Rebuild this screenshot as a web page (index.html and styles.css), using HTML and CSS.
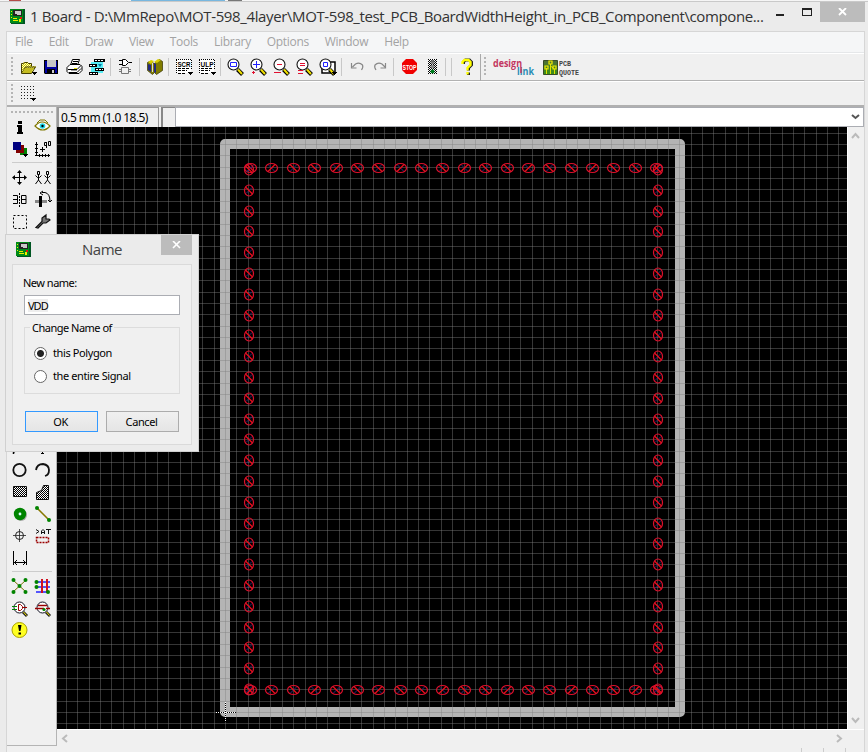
FILE: index.html
```html
<!DOCTYPE html>
<html lang="en">
<head>
<meta charset="utf-8">
<title>Board</title>
<link rel="stylesheet" href="styles.css">
</head>
<body>
<svg width="0" height="0" class="defs">
  <defs>
    <pattern id="dots" width="2" height="2" patternUnits="userSpaceOnUse"><path fill="#fff" d="M0 0h2v2H0z"/><path d="M0 0h1v1H0zM1 1h1v1H1z"/></pattern>
    <pattern id="ydots" width="2" height="2" patternUnits="userSpaceOnUse"><path fill="#ffffb0" d="M0 0h2v2H0z"/><path fill="#c6be00" d="M0 0h1v1H0zM1 1h1v1H1z"/></pattern>
    <linearGradient id="pq" x2="0" y2="1"><stop stop-color="#4f6e38"/><stop offset="1" stop-color="#3a9214"/></linearGradient>
    <symbol id="chip" viewBox="0 0 15 15"><path fill="#052" d="M1 0h14v15H1z"/><path fill="#008a18" d="M0 0h13v14H0z"/><path fill="#222" d="M3 1h9v6H3z"/><path fill="#c8c8c8" d="M5 2h6v4H7V5H5z"/><path fill="#ee0" d="M1 2h1v1H1zM1 5h1v1H1zM1 8h1v1H1zM3 9h4v1H3zM3 11h5v1H3zM9 10h2v3H9z"/><path fill="#e01010" d="M10 8h2v2h-2z"/></symbol>
    <symbol id="lens" viewBox="0 0 23 24"><path d="M13.500 14.500l5 5" stroke="#000" stroke-width="4"/><path d="M14 14.500l4 4.500" stroke="#f0e000" stroke-width="2"/><circle cx="9.500" cy="9.500" r="5.500" fill="#fff" stroke="#111" stroke-width="1.100"/></symbol>
    <symbol id="arrow" viewBox="0 0 5 3"><path d="M0 0h5v1H4v1H3v1H2V2H1V1H0z"/></symbol>
  </defs>
</svg>
<div class="window">
  <div class="behind"><i class="b1"></i><i class="b2"></i><i class="b3"></i></div>
  <header class="titlebar">
    <svg class="appicon" width="15" height="15"><use href="#chip" width="15" height="15"/></svg>
    <span class="caption">1 Board - D:\MmRepo\MOT-598_4layer\MOT-598_test_PCB_BoardWidthHeight_in_PCB_Component\compone...</span>
    <span class="min"></span><span class="max"></span>
    <span class="close"><svg width="10" height="8"><path d="M1 0l7 7M8 0L1 7" stroke="#fff" stroke-width="1.800"/></svg></span>
  </header>
  <div class="client">
    <nav class="menu"><span>File</span><span>Edit</span><span>Draw</span><span>View</span><span>Tools</span><span>Library</span><span>Options</span><span>Window</span><span>Help</span></nav>
    <div class="toolbar">
      <i class="grip"></i>
      <svg class="ic" viewBox="0 0 23 24"><path d="M5 18V8h2l1-1h4l1 1h3v3h4l-4 7z" fill="url(#ydots)"/><path d="M5.500 18V8.500h2l1-1h3l1 1h3V11M5.500 18.500l4-6.500h10l-4 6.500z" fill="none" stroke="#443e00"/><path d="M9 13h9l-3 5H6z" fill="#c4bc20"/><use href="#arrow" x="16" y="17" width="5" height="3"/></svg>
      <svg class="ic" viewBox="0 0 23 24"><path d="M5 5h14v14H6l-1-1z"/><path fill="#0000a0" d="M6 6h12v12H6z"/><path fill="#c5c5c5" d="M8 5h9v7H8z"/><path d="M8 14h8v5H8z"/><path fill="#ccc" d="M13 15h2v3h-2z"/></svg>
      <svg class="ic" viewBox="0 0 23 24"><path d="M8.500 10l2-5.500h7l-2 5.500M5 12.500l3-3h10l2 2v4l-3 3H7l-2-2z" fill="#fff" stroke="#000"/><path d="M11 6.500h5M10 8.500h5M6 14.500h9l4-4M7 17.500h8l4-4" stroke="#000" fill="none"/><path d="M12 13h3v1h-3z" fill="#dd0"/><path d="M9 15h6v1H9z" fill="#999"/></svg>
      <svg class="ic" viewBox="0 0 23 24"><path fill="#55edf5" d="M6 7h12v11H6z"/><path d="M9 4h11v3H9zM4 9h8v3H4zM10 13h9v3h-9zM4 17h9v3H4z"/><path stroke="#fff" stroke-dasharray="2 1" d="M10 5.500h9M5 10.500h6M11 14.500h7M5 18.500h7"/><path d="M13 9h4l-2 3z" fill="#0878a0"/></svg>
      <i class="sep"></i>
      <svg class="ic schem" viewBox="0 0 23 24"><path fill="#fff" stroke="#000" d="M9.500 4.500h3l3 3-3 3h-3z"/><path stroke="#000" d="M6 5.500h3M6 9.500h3M16 7.500h3"/><path fill="none" stroke="#777" d="M8.500 12.500h7v6h-7zM6 14.500h2M6 16.500h2M16 14.500h2M16 16.500h2"/></svg>
      <i class="sep"></i>
      <svg class="ic" viewBox="0 0 23 24"><path fill="#807c00" stroke="#343000" stroke-width=".7" d="M4.500 7.500l2-1 5 2 5-4 3 2v9l-6 4-2-2-2 2-5-4z"/><path fill="#d8d000" d="M5 7l3-2 3 1-3 3zM11 7l4-3 3 1-4 3z"/><path d="M5 9l3 1v7l-3-2zM11 8l2 1v9l-2-1z" fill="#222880"/><path d="M9.500 8v9" stroke="#ddd"/></svg>
      <i class="sep"></i>
      <svg class="ic" viewBox="0 0 23 24"><path fill="#fff" d="M4 4h15v14H4z"/><path stroke="#000" stroke-dasharray="1 1" d="M4 4.500h16M4.500 5v14M19.500 5v10"/><text class="pix" x="5.500" y="11.500" textLength="13" lengthAdjust="spacingAndGlyphs">SCR</text><path stroke="#000" stroke-dasharray="3 1" d="M6 13.500h11M6 15.500h9M6 18.500h8"/><use href="#arrow" x="16" y="17" width="5" height="3"/></svg>
      <svg class="ic" viewBox="0 0 23 24"><path fill="#fff" d="M4 4h15v14H4z"/><path stroke="#000" stroke-dasharray="1 1" d="M4 4.500h16M4.500 5v14M19.500 5v10"/><text class="pix" x="5.500" y="11.500" textLength="13" lengthAdjust="spacingAndGlyphs">ULP</text><path stroke="#000" stroke-dasharray="3 1" d="M6 13.500h11M6 15.500h9M6 18.500h8"/><use href="#arrow" x="16" y="17" width="5" height="3"/></svg>
      <i class="sep"></i>
      <svg class="ic" viewBox="0 0 23 24"><use href="#lens"/><path fill="#fff" stroke="#22f" d="M6.500 7.500h6v4h-6z"/></svg>
      <svg class="ic" viewBox="0 0 23 24"><use href="#lens"/><path stroke="#22f" d="M6 9.500h7M9.500 6v7"/><path stroke="#e01030" d="M5 17.500h3M6.500 16v3"/></svg>
      <svg class="ic" viewBox="0 0 23 24"><use href="#lens"/><path stroke="#e01030" d="M7 9.500h5M4 17.500h7"/></svg>
      <svg class="ic" viewBox="0 0 23 24"><use href="#lens"/><path stroke="#e01030" d="M7 8.500h5M7 10.500h5M5 15.500h5M5 18.500h5"/></svg>
      <svg class="ic" viewBox="0 0 23 24"><path fill="#fff" stroke="#000" stroke-width="1.500" d="M6 7h13v11H6z"/><use href="#lens"/><path fill="#fff" stroke="#22f" d="M7.500 7.500h4v4h-4z"/><use href="#arrow" x="16" y="17" width="5" height="3"/></svg>
      <i class="sep"></i>
      <svg class="ic" viewBox="0 0 23 24"><path d="M7.500 12l3-3q4-2 7 1 1 2-1 5M6.500 8v5h5" fill="none" stroke="#888" stroke-width="1.200"/></svg>
      <svg class="ic" viewBox="0 0 23 24"><path d="M17 12l-3-3q-4-2-7 1-1 2 1 5M17.500 8v5h-5" fill="none" stroke="#888" stroke-width="1.200"/></svg>
      <i class="sep"></i>
      <svg class="ic" viewBox="0 0 23 24"><path fill="#f00000" d="M9 4h7l4 4v7l-4 4H9l-4-4V8z"/><text class="stop" x="5.500" y="14.500" textLength="14" lengthAdjust="spacingAndGlyphs">STOP</text></svg>
      <svg class="ic" viewBox="0 0 23 24"><path fill="url(#dots)" d="M8 4h9v15H8z"/><circle cx="12.500" cy="7" r="2" fill="#777"/><circle cx="12.500" cy="11.500" r="2" fill="#888"/><circle cx="12.500" cy="16.500" r="2" fill="#008020"/></svg>
      <i class="sep"></i><i class="sep"></i>
      <svg class="ic" viewBox="0 0 23 24"><path d="M8.500 9V7l2-2h4l2 2v3l-3 3v2.500M13.500 17.500v2.500" fill="none" stroke="#222" stroke-width="3"/><path d="M7.500 9V7l2-2h4l2 2v3l-3 3v2.500M12.500 17v2.500" fill="none" stroke="#ff0" stroke-width="2.400"/></svg>
      <i class="edge"></i><i class="grip second"></i>
      <svg class="dlink" width="43" height="24"><text x="0" y="12" class="dl1" textLength="29" lengthAdjust="spacingAndGlyphs">design</text><text x="24" y="20" class="dl2" textLength="17" lengthAdjust="spacingAndGlyphs">link</text><path stroke="#c3365f" stroke-width="1.500" d="M28 12v6"/></svg>
      <svg class="pcbq" width="38" height="24"><path fill="url(#pq)" stroke="#384c28" d="M.5 5.500h14v14H.5z"/><path fill="none" stroke="#e0e000" d="M3.500 19v-6M7.500 19V9M11.500 19v-5l-4-3"/><path fill="none" stroke="#f4ec00" stroke-width="1.200" d="M2 11h3v3H2zM6 6h3v3H6zM10 11h3v3h-3z"/><text class="pq" x="16" y="11" textLength="12" lengthAdjust="spacingAndGlyphs">PCB</text><text class="pq" x="16" y="20" textLength="20" lengthAdjust="spacingAndGlyphs">QUOTE</text></svg>
    </div>
    <div class="toolbar params">
      <i class="grip"></i>
      <svg width="20" height="20" class="gridic"><path stroke="#222" stroke-dasharray="1 2" d="M2 2.500h13M2 5.500h13M2 8.500h13M2 11.500h13M2 14.500h10"/><use href="#arrow" x="12" y="14" width="5" height="3"/></svg>
    </div>
    <div class="work">
      <aside class="tools">
        <i class="hgrip"></i>
        <div class="pair">
          <svg viewBox="0 0 23 22"><path d="M10 5h4v3h-4zM9 9h5v7h1v2H9v-2h1v-5H9z"/></svg>
          <svg viewBox="0 0 23 22"><path d="M4 10q7-8 15 0-7 8-15 0z" fill="#fff" stroke="#807800" stroke-width="1.200"/><path d="M6 7l3-3h5l3 3" fill="none" stroke="#807800"/><circle cx="11.500" cy="10" r="2.800" fill="#20d8e8"/><circle cx="11.500" cy="10" r="1.200"/></svg>
          <svg viewBox="0 0 23 22"><path fill="#008000" d="M12 10h7v7h-7z"/><path fill="#800000" d="M8 7h8v8H8z"/><path fill="#000080" d="M5 4h8v8H5z"/><use href="#arrow" x="15" y="16" width="5" height="3"/></svg>
          <svg viewBox="0 0 23 22"><path fill="none" stroke="#000" d="M5.500 4v13.500M4 17.500h15M4 6.500h3M4 10.500h3M4 14.500h3M8.500 16v3M11.500 16v3M14.500 16v3M17.500 16v3M9 11.500h5M11.500 9v5M13.500 4.500h2v3h-2zM15.500 4v6M17.500 3.500h2v4h-2z"/></svg>
        </div>
        <i class="hsep"></i>
        <div class="pair">
          <svg viewBox="0 0 23 22"><path d="M11.500 5v13M5 11.500h13" stroke="#000"/><path d="M11.500 4l2.500 3h-5zM11.500 19l2.500-3h-5zM4 11.500l3-2.500v5zM19 11.500l-3-2.500v5z"/></svg>
          <svg viewBox="0 0 23 22"><path fill="none" stroke="#000" d="M6.500 5.500h2v3h-2zM15.500 5.500h2v3h-2zM4.500 9.500l2 2h2l2-2M7.500 9v5l-3 4M7.500 14l3 4M13.500 9.500l2 2h2l2-2M16.500 9v5l-3 4M16.500 14l3 4"/></svg>
          <svg viewBox="0 0 23 22"><path fill="none" stroke="#000" d="M5 7.500h4.500v8H5M5 11.500h4M18 7.500h-4.500v8H18zM14 11.500h4"/><path stroke="#000" stroke-dasharray="2 1" d="M11.500 5v14"/></svg>
          <svg viewBox="0 0 23 22"><path fill="#888" d="M4 12h12v3H4z"/><path d="M8 8h3v11H8z"/><path fill="none" stroke="#000" d="M11 4.500h3q5 1 5 9M12 3l-3 2 3 2M17 12l2 2 2-2"/></svg>
          <svg viewBox="0 0 23 22"><path fill="none" stroke="#000" stroke-dasharray="2 2" d="M5.500 5.500h13v13h-13z"/></svg>
          <svg viewBox="0 0 23 22"><path d="M5 17.500l6-6V8l4-3v4h3l1 1-4 3h-3l-5 5z" fill="#777" stroke="#111" stroke-width="1.200"/></svg>
        </div>
        <i class="hidden-rows"></i>
        <div class="pair">
          <svg viewBox="0 0 23 22"><path d="M5.500 17v-1.500L18 5" fill="none" stroke="#000" stroke-width="1.500"/></svg>
          <svg viewBox="0 0 23 22"><path d="M7 5h8M11.500 5v11M10 16.500h3" stroke="#000"/></svg>
          <svg viewBox="0 0 23 22"><circle cx="11.500" cy="11" r="6.200" fill="none" stroke="#111" stroke-width="1.800"/></svg>
          <svg viewBox="0 0 23 22"><path d="M5 11q1-6 7-6 6 1 6 6 0 5-4 6" fill="none" stroke="#111" stroke-width="1.800"/></svg>
          <svg viewBox="0 0 23 22"><path fill="url(#dots)" stroke="#111" d="M5.500 5.500h13v10h-13z"/></svg>
          <svg viewBox="0 0 23 22"><path fill="url(#dots)" stroke="#111" d="M5.500 18.500v-7l5-2 2-5h5v14z"/></svg>
          <svg viewBox="0 0 23 22"><circle cx="13" cy="12" r="6" fill="#aaa"/><circle cx="12" cy="11" r="6.200" fill="#008400"/><circle cx="12" cy="11" r="1.400" fill="#dff"/></svg>
          <svg viewBox="0 0 23 22"><path d="M6 5l12 12" stroke="#887800" stroke-width="1.500"/><circle cx="6" cy="5" r="2" fill="#008400"/><circle cx="18" cy="17" r="2" fill="#008400"/></svg>
          <svg viewBox="0 0 23 22"><circle cx="11.500" cy="10.500" r="4" fill="none" stroke="#222"/><path d="M5 10.500h13M11.500 4v13" stroke="#222" stroke-width=".8"/></svg>
          <svg viewBox="0 0 23 22"><path d="M5 4.500l3 2-3 2M10.500 9V6L12 4.500 13.500 6v3M10.500 7.500h3M15 4.500h5M17.500 5v4" fill="none" stroke="#111"/><path d="M5.500 12.500h12v5h-12z" fill="none" stroke="#900" stroke-dasharray="2 1" stroke-width="1.500"/></svg>
          <svg viewBox="0 0 23 22"><path d="M5.500 4v14M18.500 4v14M6 15.500h12M9 13l-2.500 2.500L9 18M15 13l2.500 2.500L15 18" fill="none" stroke="#000"/></svg>
        </div>
        <i class="hsep"></i>
        <div class="pair">
          <svg viewBox="0 0 23 22"><path d="M5 5l13 12M18 5L5 17" stroke="#776b00"/><g fill="#008400"><circle cx="5.500" cy="5" r="2"/><circle cx="17.500" cy="5" r="2"/><circle cx="11.500" cy="11" r="2"/><circle cx="5.500" cy="17" r="2"/><circle cx="17.500" cy="17" r="2"/></g></svg>
          <svg viewBox="0 0 23 22"><path d="M5 7h14M5 12h14M5 17h12" stroke="#22f" stroke-width="1.500"/><path d="M11 4v14M16 4v14" stroke="#d01020" stroke-width="2"/><g fill="#008400"><circle cx="5.500" cy="7" r="2"/><circle cx="5.500" cy="12" r="2"/><circle cx="17" cy="17" r="2"/></g></svg>
          <svg viewBox="0 0 23 22"><path d="M15 15l4 4" stroke="#222" stroke-width="3"/><path d="M15.500 15l3 3.500" stroke="#fe0"/><circle cx="11.500" cy="10.500" r="5.500" fill="#fff" stroke="#112"/><path d="M10.500 7.500h2l2 2v2l-2 2h-2zM15 10.500h4" fill="none" stroke="#900"/><path d="M4 9.500h5M4 12.500h5" stroke="#008400"/></svg>
          <svg viewBox="0 0 23 22"><path d="M15 15l4 4" stroke="#222" stroke-width="3"/><path d="M15.500 15l3 3.500" stroke="#fe0"/><circle cx="11.500" cy="10.500" r="5.500" fill="#fff" stroke="#112"/><path d="M7 8.500h9M4 11.500h9M15 11.500h4" stroke="#900" stroke-width="1.500"/><circle cx="13" cy="12.500" r="1.600" fill="#008400"/></svg>
          <svg viewBox="0 0 23 22"><circle cx="11.500" cy="11" r="7.500" fill="#ff2" stroke="#aaa200"/><path d="M10 6h3.500l-1 6h-1.500zM10.500 13.500h2.500v2h-2.500z"/></svg>
        </div>
      </aside>
      <main class="editor">
        <div class="command"><span class="coords">0.5 mm (1.0 18.5)</span><span class="blank"></span><span class="combo"><svg width="9" height="6"><path d="M1 1l3.500 3L8 1" fill="none" stroke="#555" stroke-width="2"/></svg></span></div>
        <div class="view">
          <svg id="board" width="790" height="602" viewBox="57 127 790 602"></svg>
          <div class="vscroll"><svg width="9" height="7"><path d="M1 6l3.500-4L8 6" fill="none" stroke="#bbb" stroke-width="2"/></svg><svg width="9" height="7"><path d="M1 1l3.500 4L8 1" fill="none" stroke="#bbb" stroke-width="2"/></svg></div>
        </div>
        <div class="hscroll"><svg width="7" height="9"><path d="M6 1L2 4.500 6 8" fill="none" stroke="#bbb" stroke-width="2"/></svg><svg width="7" height="9"><path d="M1 1l4 3.500L1 8" fill="none" stroke="#bbb" stroke-width="2"/></svg></div>
      </main>
    </div>
    <div class="status"><i></i><i></i><i></i></div>
  </div>
</div>
<section class="dialog">
  <div class="dtitle"><svg width="15" height="15"><use href="#chip" width="15" height="15"/></svg><span class="dname">Name</span><span class="dclose"><svg width="9" height="8"><path d="M1 0l7 7M8 0L1 7" stroke="#fff" stroke-width="1.600"/></svg></span></div>
  <div class="dbody">
    <label class="newname">New name:</label>
    <div class="field"><span>VDD</span></div>
    <fieldset><legend>Change Name of</legend>
      <div class="radio"><i class="on"></i><span>this Polygon</span></div>
      <div class="radio"><i></i><span>the entire Signal</span></div>
    </fieldset>
    <div class="buttons"><span class="ok">OK</span><span>Cancel</span></div>
  </div>
</section>
<script src="board.js"></script>
</body>
</html>
```
FILE: styles.css
```css
* { box-sizing: border-box; }
body { margin: 0; width: 868px; height: 752px; overflow: hidden; background: #ebebeb; font-family: "Noto Sans", sans-serif; color: #000; }
.defs { position: absolute; }
svg { display: block; flex: none; }
.window { height: 752px; display: flex; flex-direction: column; }
.behind { height: 2px; background: #f5f5f5; border-bottom: 1px solid #c9c9c9; display: flex; }
.behind i { height: 1px; }
.b1 { width: 12px; margin-left: 9px; background: #b34c48; }
.b2 { width: 94px; margin-left: 110px; background: #78b7df; }
.b3 { width: 14px; margin-left: 3px; background: #777; }
.titlebar { height: 29px; display: flex; align-items: flex-start; }
.appicon { margin: 7px 0 0 10px; }
.caption { width: 734px; margin: 3px 0 0 5px; font: 15px/22px "Open Sans", sans-serif; color: #333; white-space: nowrap; letter-spacing: -0.38px; }
.min { width: 8px; height: 2px; background: #222; margin: 12px 0 0 12px; }
.max { width: 10px; height: 8px; border: 1px solid #222; border-top-width: 2px; margin: 6px 0 0 18px; }
.close { width: 45px; height: 20px; background: #bcbcbc; margin-left: auto; margin-right: 3px; display: flex; align-items: center; justify-content: center; }
.client { flex: 1; margin: 0 3px 0 6px; border: 1px solid #d6d6d6; border-bottom: 0; background: #f0f0f0; display: flex; flex-direction: column; min-height: 0; }
.menu { height: 21px; background: #f5f6f7; border-bottom: 1px solid #e5e7e9; display: flex; padding-left: 8px; font: 12px/20px "Open Sans", sans-serif; color: #a3a3a3; gap: 16px; letter-spacing: -0.33px; }
.toolbar { height: 28px; display: flex; align-items: center; border-top: 1px solid #fff; border-bottom: 1px solid #b2b2b2; }
.params { height: 26px; border-bottom: 2px solid #b0b0b0; }
.grip { width: 3px; height: 20px; margin: 0 2px 0 4px; background: radial-gradient(circle at 1px 1px, #b5b5b5 1px, transparent 1.3px) 0 0/3px 4px; }
.ic { width: 23px; height: 24px; }
.schem { margin: 0 1px 0 -1px; }
.sep { width: 6px; height: 18px; background: linear-gradient(90deg, transparent 2px, #c8c8c8 2px, #c8c8c8 3px, transparent 3px); }
.edge { width: 1px; height: 27px; background: #aaa; margin-left: 2px; }
.second { margin: 0 0 0 3px; }
.dlink { margin-left: 6px; }
.pcbq { margin-left: 7px; }
.pix { font: bold 7px "Liberation Sans", sans-serif; }
.stop { font: bold 7px "Liberation Sans", sans-serif; fill: #fff; }
.dl1 { font: bold 11px "Open Sans", sans-serif; fill: #c3365f; }
.dl2 { font: bold 10px "Open Sans", sans-serif; fill: #2b8db5; }
.pq { font: bold 7px "Liberation Mono", monospace; fill: #444; }
.gridic { margin-left: 3px; }
.work { flex: 1; display: flex; min-height: 0; }
.tools { width: 50px; border-right: 1px solid #b4b4b4; border-bottom: 1px solid #b4b4b4; padding: 4px 0 0 1px; display: flex; flex-direction: column; height: 639px; }
.hgrip { height: 3px; width: 42px; margin: 0 0 2px 3px; background: radial-gradient(circle at 1px 1px, #b5b5b5 1px, transparent 1.3px) 0 0/4px 3px; flex: none; }
.pair { display: grid; grid-template-columns: 23px 23px; grid-auto-rows: 22px; flex: none; }
.pair svg { width: 23px; height: 22px; }
.hsep { height: 6px; width: 40px; margin-left: 4px; flex: none; background: linear-gradient(transparent 2px, #ccc 2px, #ccc 3px, transparent 3px); }
.hidden-rows { height: 205px; flex: none; }
.editor { flex: 1; display: flex; flex-direction: column; min-width: 0; }
.command { height: 20px; display: flex; }
.coords { width: 102px; flex: none; border: 1px solid #999; border-width: 1px 1px 0 2px; font-size: 12px; line-height: 19px; padding-left: 2px; white-space: nowrap; letter-spacing: -0.58px; }
.blank { width: 14px; flex: none; margin: 0 0 0 2px; border-left: 2px solid #888; border-top: 1px solid #888; }
.combo { flex: 1; background: #fff; border: 1px solid #abadb3; border-top-width: 1px; display: flex; justify-content: flex-end; align-items: center; padding-right: 3px; }
.view { height: 602px; display: flex; }
.vscroll { flex: 1; border-left: 1px solid #fff; display: flex; flex-direction: column; justify-content: space-between; padding: 5px 0 5px 3px; }
.hscroll { height: 17px; border-top: 1px solid #fff; display: flex; justify-content: space-between; align-items: center; padding: 0 21px 0 4px; }
.status { height: 6px; display: flex; justify-content: flex-end; gap: 21px; padding: 2px 18px 0 0; }
.status i { width: 1px; height: 4px; background: #ccc; }
.dialog { position: absolute; left: 5px; top: 234px; width: 194px; height: 218px; background: #ebebeb; border: 1px solid #d0d0d0; font-size: 11px; letter-spacing: -0.4px; }
.dtitle { height: 29px; display: flex; }
.dtitle > svg { margin: 7px 0 0 10px; }
.dname { font: 15px/29px "Open Sans", sans-serif; color: #444; margin-left: 51px; letter-spacing: -0.5px; }
.dclose { width: 31px; height: 20px; margin: 0 6px 0 auto; background: #bcbcbc; display: flex; align-items: center; justify-content: center; }
.dbody { margin: 0 6px; height: 181px; border: 1px solid #dadada; background: #f0f0f0; padding: 10px 11px 0; }
.newname { display: block; line-height: 15px; height: 20px; margin-left: -1px; letter-spacing: -0.5px; }
.field { height: 20px; width: 156px; background: #fff; border: 1px solid #abadb3; padding: 3px; line-height: 13px; }
.field span { background: #eee; display: inline-block; letter-spacing: -1px; }
fieldset { height: 73px; width: 156px; margin: 6px 0 0; padding: 8px 0 0 9px; border: 1px solid #dcdcdc; min-width: 0; }
legend { padding: 0 2px; height: 13px; line-height: 13px; margin-left: -4px; letter-spacing: -0.5px; }
.radio { display: flex; align-items: center; height: 23px; white-space: nowrap; }
.radio span { line-height: 13px; margin-top: -2px; }
.radio i { width: 13px; height: 13px; margin-top: -1px; border: 1px solid #666; border-radius: 50%; background: #fff; margin-right: 6px; flex: none; }
.radio .on { background: radial-gradient(circle, #222 3px, #fff 4px); }
.buttons { display: flex; gap: 8px; margin: 17px 0 0 1px; }
.buttons span { width: 73px; height: 21px; border: 1px solid #acacac; background: linear-gradient(#f0f0f0, #e5e5e5); text-align: center; line-height: 19px; padding-right: 2px; }
.buttons .ok { border-color: #3399ff; }
```
FILE: board.js
```javascript
const pitch = 11.36, origin = { x: 225, y: 712 };
const out = [];
const rect = (x, y, w, h, c) => out.push(`<rect x="${x}" y="${y}" width="${w}" height="${h}" fill="${c}"/>`);
rect(57, 127, 790, 602, '#000');
out.push('<rect x="225" y="144" width="455" height="568" fill="none" stroke="#b4b4b4" stroke-width="10" stroke-linejoin="round"/>');
const lineColor = 'rgba(128,128,128,.42)';
for (let i = -14; i < 56; i++) rect(Math.round(origin.x + i * pitch), 127, 1, 602, lineColor);
for (let i = -1; i < 52; i++) rect(57, Math.round(origin.y - i * pitch), 790, 1, lineColor);

// Outline pad marks: wide on horizontal edges, tall on vertical edges.
function mark(x, y, wide, n) {
  const rx = wide ? 6 : 4.5, ry = wide ? 4.5 : 5.5;
  const s = n % 3 === 1 ? -1 : 1;
  out.push(`<path d="M${x - s * 3} ${y + 3}L${x + s * 3} ${y - 3}" stroke="#272780"/>`);
  out.push(`<path d="M${x - s * 3.5} ${y - 3.5}L${x + s * 3.5} ${y + 3.5}" stroke="#f00c18" stroke-width="1.2"/>`);
  out.push(`<ellipse cx="${x}" cy="${y}" rx="${rx}" ry="${ry}" fill="none" stroke="#dc102c" stroke-width="1.2"/>`);
}
for (let i = 0; i < 20; i++) {
  const x = Math.round(250 + i * 21.38) + .5;
  mark(x, 168, true, i);
  mark(x, 690, true, i + 1);
}
for (let i = 0; i < 26; i++) {
  const y = Math.round(169 + i * 20.8) + .5;
  mark(249, y, false, 2);
  mark(658, y, false, 2);
}
out.push('<path d="M216 712.5h20M225.500 702v20" stroke="#000"/><path d="M216 712.5h20M225.500 702v20" stroke="#fff" stroke-dasharray="1 1"/>');
document.getElementById('board').innerHTML = out.join('');
```
